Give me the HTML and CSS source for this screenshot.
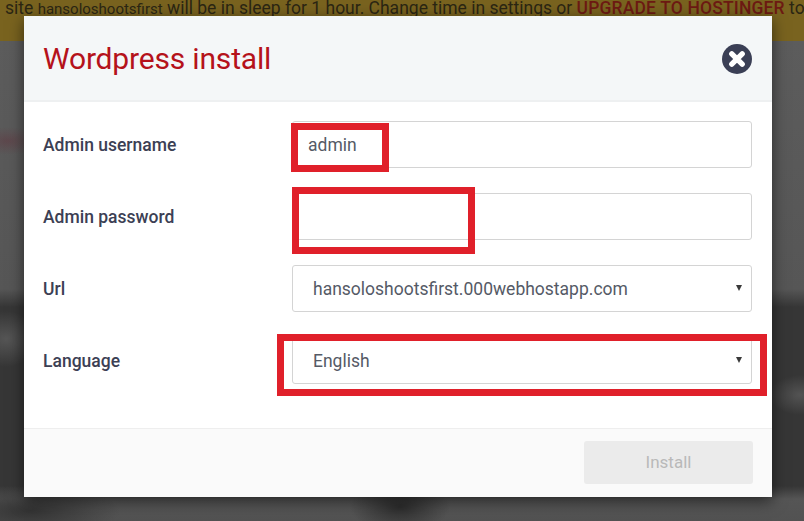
FILE: index.html
```html
<!DOCTYPE html>
<html lang="en">
<head>
  <meta charset="UTF-8" />
  <meta name="viewport" content="width=device-width, initial-scale=1.0" />
  <title>Wordpress install</title>
  <link rel="stylesheet" href="styles.css">
</head>
<body>
  <div class="aviso">
    <span>site <small>hansoloshootsfirst</small> will be in sleep for 1 hour. Change time in settings or <b>UPGRADE TO HOSTINGER</b> to</span>
  </div>
  <div class="fundo"></div>

  <div class="modal">
    <div class="modal-topo">
      <h1>Wordpress install</h1>
      <svg class="fechar" viewBox="0 0 30 30" aria-label="Close">
        <circle cx="15" cy="15" r="15" fill="#3a3f55" />
        <path d="M9.8 9.8 L20.2 20.2 M20.2 9.8 L9.8 20.2" stroke="#fff" stroke-width="5.4" stroke-linecap="round" />
      </svg>
    </div>

    <div class="formulario">
      <div class="linha">
        <label for="usuario">Admin username</label>
        <input type="text" id="usuario" value="admin" />
      </div>
      <div class="linha">
        <label for="senha">Admin password</label>
        <input type="password" id="senha" />
      </div>
      <div class="linha">
        <label for="url">Url</label>
        <div class="selecao">
          <select id="url">
            <option>hansoloshootsfirst.000webhostapp.com</option>
          </select>
        </div>
      </div>
      <div class="linha">
        <label for="idioma">Language</label>
        <div class="selecao">
          <select id="idioma">
            <option>English</option>
          </select>
        </div>
      </div>
    </div>

    <div class="modal-rodape">
      <button disabled>Install</button>
    </div>

    <!-- marcas vermelhas do tutorial -->
    <div class="marca marca-usuario"></div>
    <div class="marca marca-senha"></div>
    <div class="marca marca-idioma"></div>
  </div>
</body>
</html>
```

FILE: styles.css
```css
* {
  box-sizing: border-box;
}
html, body {
  height: 100%;
}
body {
  margin: 0;
  overflow: hidden;
  display: flex;
  flex-direction: column;
  font-family: Roboto, "Liberation Sans", sans-serif;
  background-color: #4e4e4e;
}
.aviso {
  flex: none;
  height: 41px;
  padding-left: 5px;
  white-space: nowrap;
  font-size: 17.5px;
  line-height: 16px;
  color: #2b2613;
  background-color: #79631f;
}
.aviso small {
  font-size: 15px;
}
.aviso b {
  font-weight: 500;
  letter-spacing: 0.15px;
  color: #6d1a13;
}
.fundo {
  flex: 1;
  background-image:
    radial-gradient(ellipse 34px 14px at 8px 100px, rgba(96, 60, 68, 0.6), rgba(96, 60, 68, 0)),
    radial-gradient(ellipse 30px 28px at 6px 298px, #565656, rgba(86, 86, 86, 0)),
    radial-gradient(ellipse 30px 20px at 800px 354px, #535353, rgba(83, 83, 83, 0)),
    radial-gradient(ellipse 50px 26px at 400px 466px, #2c2c2c, rgba(44, 44, 44, 0)),
    radial-gradient(ellipse 90px 26px at 30px 470px, #333, rgba(51, 51, 51, 0)),
    linear-gradient(to bottom, #5c5c5c 0, #565656 248px, #363636 266px, #363636 445px, #555 458px, #525252 480px);
}
.modal {
  position: absolute;
  left: 24px;
  top: 16px;
  width: 748px;
  height: 481px;
  display: flex;
  flex-direction: column;
  background-color: #fff;
  box-shadow: 0 4px 14px rgba(0, 0, 0, 0.55);
}
.modal-topo {
  flex: none;
  height: 86px;
  padding: 0 19px;
  display: flex;
  align-items: center;
  justify-content: space-between;
  background-color: #f4f7f8;
  border-bottom: 2px solid #eef0f1;
}
.modal-topo h1 {
  margin: 0;
  font-size: 30px;
  font-weight: 400;
  letter-spacing: -0.18px;
  color: #b5121b;
}
.fechar {
  width: 30px;
  height: 30px;
  margin-right: 1px;
  margin-top: 1px;
}
.formulario {
  flex: 1;
  padding: 19px 20px 0 19px;
  display: flex;
  flex-direction: column;
  gap: 25px;
}
.linha {
  display: flex;
  align-items: center;
}
.linha label {
  width: 249px;
  font-size: 17.5px;
  font-weight: 500;
  color: #3c4054;
}
.linha input, .selecao select {
  width: 460px;
  height: 47px;
  font-family: inherit;
  font-size: 17.5px;
  color: #555a66;
  background-color: #fff;
  border: 1px solid #d4d4d4;
  border-radius: 3px;
  outline: none;
}
.linha input {
  padding: 0 15px;
}
.selecao {
  position: relative;
}
.selecao select {
  display: block;
  padding: 0 20px;
  appearance: none;
}
.selecao::after {
  content: "";
  position: absolute;
  right: 10px;
  top: 20px;
  border-top: 6px solid #3a3a3a;
  border-left: 3.5px solid transparent;
  border-right: 3.5px solid transparent;
}
.modal-rodape {
  flex: none;
  height: 69px;
  padding: 12px 19px 0 0;
  display: flex;
  justify-content: flex-end;
  align-items: flex-start;
  background-color: #fafafa;
  border-top: 1px solid #eeeeee;
}
.modal-rodape button {
  width: 169px;
  height: 43px;
  padding: 0 0 2px;
  font-family: inherit;
  font-size: 17px;
  font-weight: 400;
  color: #b9b9b9;
  background-color: #ebebeb;
  border: none;
  border-radius: 3px;
}
.marca {
  position: absolute;
  border: 7px solid #e0202a;
}
.marca-usuario {
  left: 267px;
  top: 107px;
  width: 98px;
  height: 49px;
}
.marca-senha {
  left: 268px;
  top: 171px;
  width: 183px;
  height: 67px;
}
.marca-idioma {
  left: 253px;
  top: 318px;
  width: 490px;
  height: 62px;
}
```
